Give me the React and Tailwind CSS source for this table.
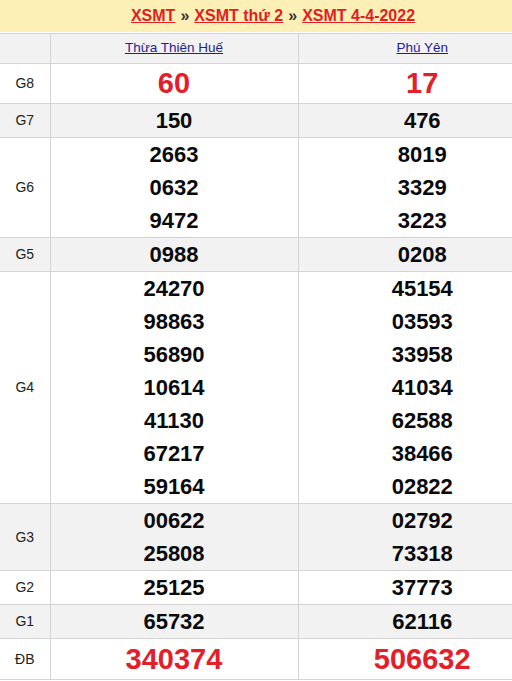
const rows = [
  { label: "G8", a: ["60"], b: ["17"], big: true, h: "h-[40px]" },
  { label: "G7", a: ["150"], b: ["476"], gray: true },
  { label: "G6", a: ["2663", "0632", "9472"], b: ["8019", "3329", "3223"] },
  { label: "G5", a: ["0988"], b: ["0208"], gray: true },
  {
    label: "G4",
    a: ["24270", "98863", "56890", "10614", "41130", "67217", "59164"],
    b: ["45154", "03593", "33958", "41034", "62588", "38466", "02822"],
  },
  { label: "G3", a: ["00622", "25808"], b: ["02792", "73318"], gray: true },
  { label: "G2", a: ["25125"], b: ["37773"] },
  { label: "G1", a: ["65732"], b: ["62116"], gray: true },
  { label: "ĐB", a: ["340374"], b: ["506632"], big: true, h: "h-[41px]" },
];

function Cell({ nums, big }) {
  return (
    <td className="border-l border-b border-[#d4d4d4] text-center p-0">
      {nums.map((n) => (
        <div
          key={n}
          className={
            big
              ? "text-[29px] font-bold text-[#e3202a] leading-[39px]"
              : "text-[22px] font-bold text-[#0a0a0a] leading-[33px]"
          }
        >
          {n}
        </div>
      ))}
    </td>
  );
}

export default function App() {
  return (
    <div className="w-[512px] h-[681px] overflow-hidden bg-white font-['Liberation_Sans',Arial,sans-serif]">
      <div className="w-[546px]">
        {/* breadcrumb */}
        <div className="h-[32px] bg-[#fdf0b7] flex items-center justify-center text-[16px] font-bold">
          <a className="text-[#e1211f] underline">XSMT</a>
          <span className="text-[#333] mx-[5px]">»</span>
          <a className="text-[#e1211f] underline">XSMT thứ 2</a>
          <span className="text-[#333] mx-[5px]">»</span>
          <a className="text-[#e1211f] underline">XSMT 4-4-2022</a>
        </div>

        {/* results table */}
        <table className="mt-[1px] w-[546px] table-fixed border-collapse">
          <colgroup>
            <col className="w-[50px]" />
            <col className="w-[248px]" />
            <col className="w-[248px]" />
          </colgroup>
          <thead>
            <tr className="h-[30px] bg-[#f2f2f2]">
              <th className="border-t border-b border-[#d4d4d4]"></th>
              <th className="border-t border-l border-b border-[#d4d4d4] font-normal text-[13.5px]">
                <a className="text-[#1c1c9c] underline">Thừa Thiên Huế</a>
              </th>
              <th className="border-t border-l border-b border-[#d4d4d4] font-normal text-[13.5px]">
                <a className="text-[#1c1c9c] underline">Phú Yên</a>
              </th>
            </tr>
          </thead>
          <tbody>
            {rows.map((r) => (
              <tr key={r.label} className={(r.gray ? "bg-[#f2f2f2] " : "bg-white ") + (r.h || "")}>
                <td className="border-b border-[#d4d4d4] text-center text-[14px] text-[#222] p-0">
                  {r.label}
                </td>
                <Cell nums={r.a} big={r.big} />
                <Cell nums={r.b} big={r.big} />
              </tr>
            ))}
          </tbody>
        </table>
      </div>
    </div>
  );
}
